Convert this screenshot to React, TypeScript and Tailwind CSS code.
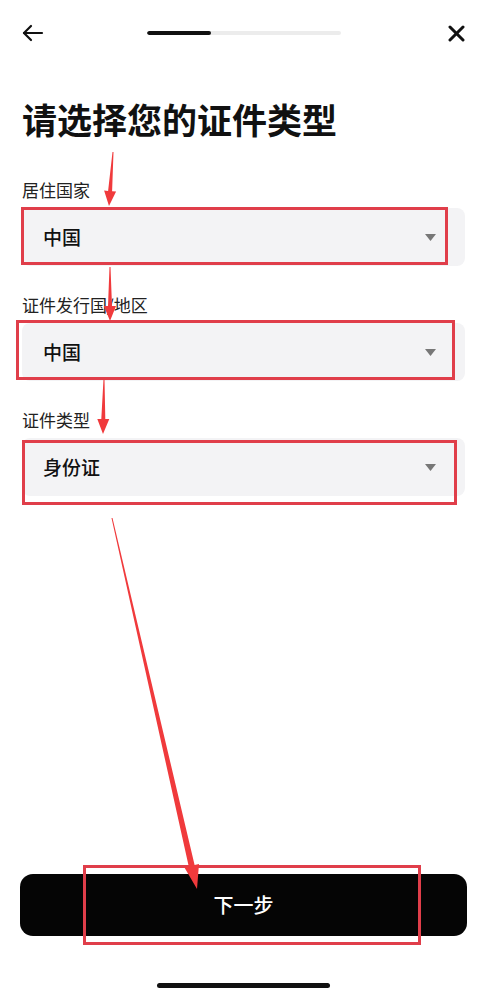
import React from 'react';

const FONT = '"Noto Sans CJK SC", "Noto Sans", sans-serif';

type Pt = [number, number];

// tapered annotation arrow: thin tail, thicker shaft, triangular head
function arrowPoints(tail: Pt, tip: Pt, tw: number, sw: number, hl: number, hw: number) {
  const dx = tip[0] - tail[0];
  const dy = tip[1] - tail[1];
  const len = Math.hypot(dx, dy);
  const ux = dx / len;
  const uy = dy / len;
  const nx = -uy;
  const ny = ux;
  const bx = tip[0] - ux * hl;
  const by = tip[1] - uy * hl;
  const p = (x: number, y: number) => `${x.toFixed(1)},${y.toFixed(1)}`;
  return [
    p(tail[0] + (nx * tw) / 2, tail[1] + (ny * tw) / 2),
    p(bx + (nx * sw) / 2, by + (ny * sw) / 2),
    p(bx + (nx * hw) / 2, by + (ny * hw) / 2),
    p(tip[0], tip[1]),
    p(bx - (nx * hw) / 2, by - (ny * hw) / 2),
    p(bx - (nx * sw) / 2, by - (ny * sw) / 2),
    p(tail[0] - (nx * tw) / 2, tail[1] - (ny * tw) / 2),
  ].join(' ');
}

const arrows: { tail: Pt; tip: Pt; tw: number; sw: number; hl: number; hw: number }[] = [
  { tail: [113, 152], tip: [109, 206], tw: 1, sw: 4, hl: 15, hw: 12 },
  { tail: [110, 267], tip: [110, 321], tw: 1, sw: 4, hl: 15, hw: 12 },
  { tail: [104, 379], tip: [103, 434], tw: 1, sw: 4, hl: 15, hw: 12 },
  { tail: [112, 518], tip: [197, 889], tw: 1, sw: 6, hl: 24, hw: 15 },
];

function Select({ value }: { value: string }) {
  return (
    <div className="flex h-[58px] items-center justify-between rounded-lg bg-[#f3f3f5] pl-[21px] pr-[29px]">
      <span className="text-[19px] font-medium text-[#111]">{value}</span>
      <svg width="11" height="7" viewBox="0 0 11 7">
        <path d="M0 0 H11 L5.5 7 Z" fill="#777" />
      </svg>
    </div>
  );
}

function Field({ label, value }: { label: string; value: string }) {
  return (
    <div className="flex flex-col gap-[6px]">
      <span className="text-[17px] leading-[24px] text-[#222]">{label}</span>
      <Select value={value} />
    </div>
  );
}

export default function App() {
  return (
    <div className="relative flex h-[994px] w-[487px] flex-col bg-white" style={{ fontFamily: FONT }}>
      {/* header */}
      <div className="flex h-[66px] items-center px-[22px]">
        <div className="flex w-[40px] items-center">
          <svg width="22" height="18" viewBox="0 0 22 18" fill="none" stroke="#111" strokeWidth="2.2" strokeLinecap="round" strokeLinejoin="round">
            <path d="M20 9 H2" />
            <path d="M9 2 L2 9 L9 16" />
          </svg>
        </div>
        <div className="flex flex-1 justify-center">
          <div className="flex h-[4px] w-[194px] overflow-hidden rounded-full bg-[#ececec]">
            <div className="h-full w-[64px] rounded-full bg-[#111]" />
          </div>
        </div>
        <div className="flex w-[40px] justify-end">
          <svg width="17" height="17" viewBox="0 0 17 17" fill="none" stroke="#111" strokeWidth="3" strokeLinecap="round">
            <path d="M2 2 L15 15" />
            <path d="M15 2 L2 15" />
          </svg>
        </div>
      </div>

      {/* body */}
      <div className="flex flex-1 flex-col px-[22px]">
        <h1 className="mt-[32px] text-[35px] font-bold leading-[42px] text-[#111]">请选择您的证件类型</h1>
        <div className="mt-[38px] flex flex-col gap-[27px]">
          <Field label="居住国家" value="中国" />
          <Field label="证件发行国/地区" value="中国" />
          <Field label="证件类型" value="身份证" />
        </div>
      </div>

      {/* footer */}
      <div className="flex flex-col items-center px-[20px]">
        <button className="flex h-[62px] w-full items-center justify-center rounded-[13px] bg-[#050505] text-[20px] font-medium text-white">
          下一步
        </button>
        <div className="mb-[6px] mt-[47px] h-[5px] w-[173px] rounded-full bg-[#111]" />
      </div>

      {/* annotation boxes */}
      <div className="pointer-events-none absolute left-[21px] top-[207px] h-[58px] w-[427px] border-[3px] border-[#e03e4a]" />
      <div className="pointer-events-none absolute left-[16px] top-[320px] h-[60px] w-[439px] border-[3px] border-[#e03e4a]" />
      <div className="pointer-events-none absolute left-[22px] top-[440px] h-[65px] w-[435px] border-[3px] border-[#e03e4a]" />
      <div className="pointer-events-none absolute left-[83px] top-[865px] h-[80px] w-[338px] border-[3px] border-[#e03e4a]" />

      {/* annotation arrows */}
      <svg className="pointer-events-none absolute left-0 top-0" width="487" height="994">
        {arrows.map((a, i) => (
          <polygon key={i} points={arrowPoints(a.tail, a.tip, a.tw, a.sw, a.hl, a.hw)} fill="#f03a3c" />
        ))}
      </svg>
    </div>
  );
}
